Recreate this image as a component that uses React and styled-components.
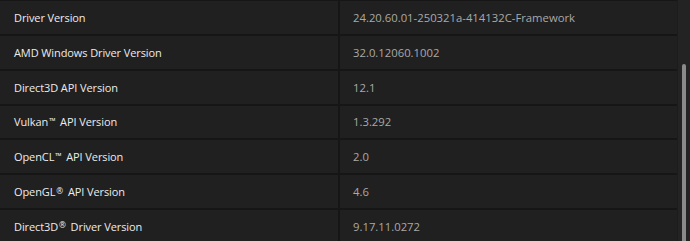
import React from "react";
import styled, { createGlobalStyle } from "styled-components";

const GlobalStyle = createGlobalStyle`
  html, body {
    margin: 0;
    padding: 0;
    background: #202020;
    overflow: hidden;
  }
`;

const Page = styled.div`
  display: flex;
  width: 690px;
  height: 241px;
  overflow: hidden;
  background: #202020;
  font-family: "Open Sans", "Noto Sans", sans-serif;
`;

const Table = styled.div`
  width: 677px;
  display: grid;
  grid-template-columns: 338px 1fr;
  grid-auto-rows: 32.8px;
  column-gap: 2px;
  row-gap: 2px;
  align-content: start;
  padding-top: 1.2px;
  background: #161616;
  box-sizing: border-box;
`;

const Cell = styled.div`
  display: flex;
  align-items: center;
  background: #202020;
  padding-left: ${(props) => (props.value ? "13px" : "14px")};
  font-size: ${(props) => (props.value ? "11.3px" : "11px")};
  letter-spacing: ${(props) => (props.value ? "0" : "-0.1px")};
  color: ${(props) => (props.value ? "#a9a9a9" : "#ececec")};
  white-space: nowrap;
`;

const Sup = styled.span`
  font-size: 0.75em;
  margin: 0 2px 0 1px;
  vertical-align: 0.3em;
  line-height: 0;
`;

const Track = styled.div`
  flex: 1;
  display: flex;
  justify-content: center;
  padding: 64px 1px 0 0;
  background: #232323;
  border-left: 1px solid #1c1c1c;
`;

const Thumb = styled.div`
  width: 4px;
  border-radius: 2px 2px 0 0;
  background: #8a8a8a;
`;

const rows = [
  ["Driver Version", "24.20.60.01-250321a-414132C-Framework"],
  ["AMD Windows Driver Version", "32.0.12060.1002"],
  ["Direct3D API Version", "12.1"],
  [["Vulkan", "™", " API Version"], "1.3.292"],
  [["OpenCL", "™", " API Version"], "2.0"],
  [["OpenGL", "®", " API Version"], "4.6"],
  [["Direct3D", "®", " Driver Version"], "9.17.11.0272"],
];

const Label = ({ text }) =>
  Array.isArray(text) ? (
    <span>
      {text[0]}
      <Sup>{text[1]}</Sup>
      {text[2]}
    </span>
  ) : (
    <span>{text}</span>
  );

const App = () => {
  return (
    <>
      <GlobalStyle />
      <Page>
        <Table>
          {rows.map(([label, value], i) => (
            <React.Fragment key={i}>
              <Cell>
                <Label text={label} />
              </Cell>
              <Cell value>{value}</Cell>
            </React.Fragment>
          ))}
        </Table>
        <Track>
          <Thumb />
        </Track>
      </Page>
    </>
  );
};

export default App;
